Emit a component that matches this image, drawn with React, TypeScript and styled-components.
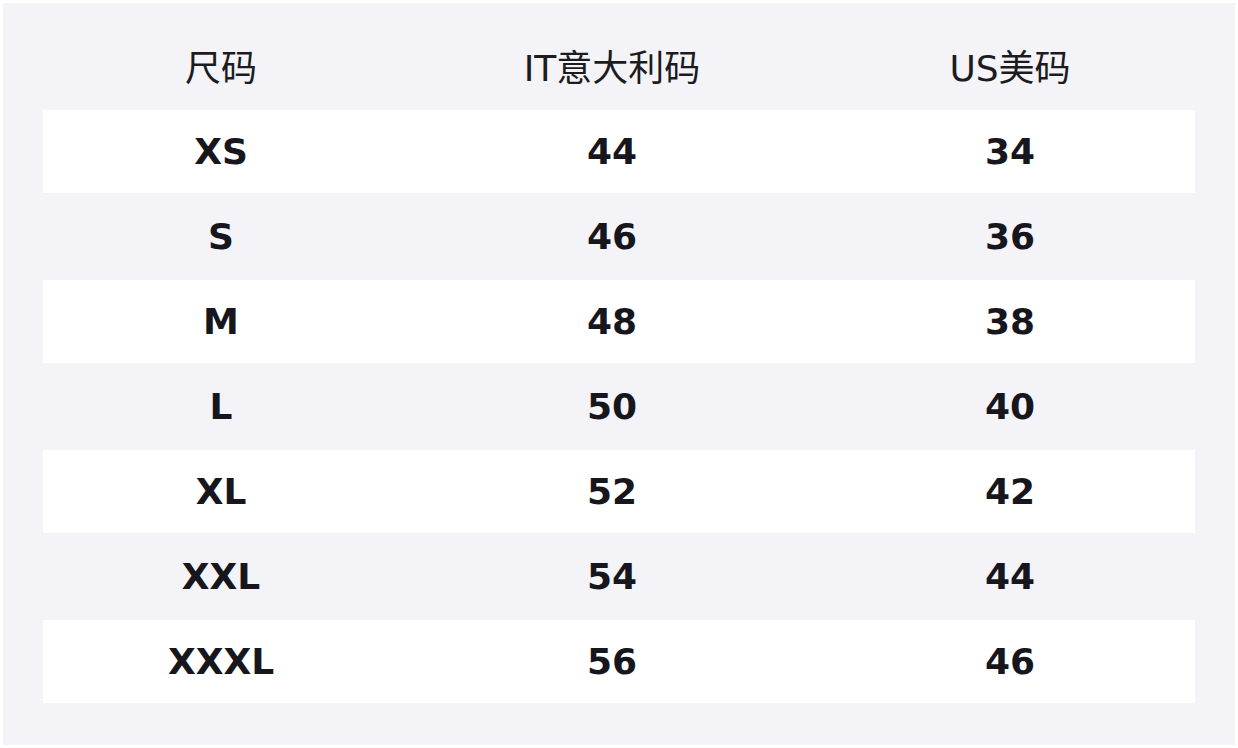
import styled, { createGlobalStyle } from "styled-components";

const GlobalStyle = createGlobalStyle`
  body {
    margin: 0;
    padding: 3px;
    background: #ffffff;
    font-family: "DejaVu Sans", "Noto Sans CJK SC", sans-serif;
  }
`;

const Panel = styled.div`
  width: 1232px;
  height: 742px;
  box-sizing: border-box;
  padding: 20px 40px 40px;
  background: #f3f3f8;
`;

const Row = styled.div<{ $striped?: boolean; $head?: boolean }>`
  display: grid;
  grid-template-columns: 356px 426px 1fr;
  box-sizing: border-box;
  height: ${(p) => (p.$head ? "87px" : "83px")};
  padding-bottom: ${(p) => (p.$head ? "4px" : "0")};
  margin-bottom: ${(p) => (p.$head ? "0" : "2px")};
  background: ${(p) => (p.$striped ? "#ffffff" : "transparent")};
`;

const Cell = styled.div<{ $head?: boolean }>`
  display: flex;
  align-items: center;
  justify-content: center;
  font-size: 36px;
  font-weight: ${(p) => (p.$head ? 400 : 700)};
  color: ${(p) => (p.$head ? "#1b1b20" : "#16161c")};
`;

const sizes = [
  ["XS", "44", "34"],
  ["S", "46", "36"],
  ["M", "48", "38"],
  ["L", "50", "40"],
  ["XL", "52", "42"],
  ["XXL", "54", "44"],
  ["XXXL", "56", "46"],
];

export default function App() {
  return (
    <>
      <GlobalStyle />
      <Panel>
        <Row $head>
          <Cell $head>尺码</Cell>
          <Cell $head>IT意大利码</Cell>
          <Cell $head>US美码</Cell>
        </Row>
        {sizes.map((s, i) => (
          <Row key={s[0]} $striped={i % 2 === 0}>
            {s.map((v, j) => (
              <Cell key={j}>{v}</Cell>
            ))}
          </Row>
        ))}
      </Panel>
    </>
  );
}
